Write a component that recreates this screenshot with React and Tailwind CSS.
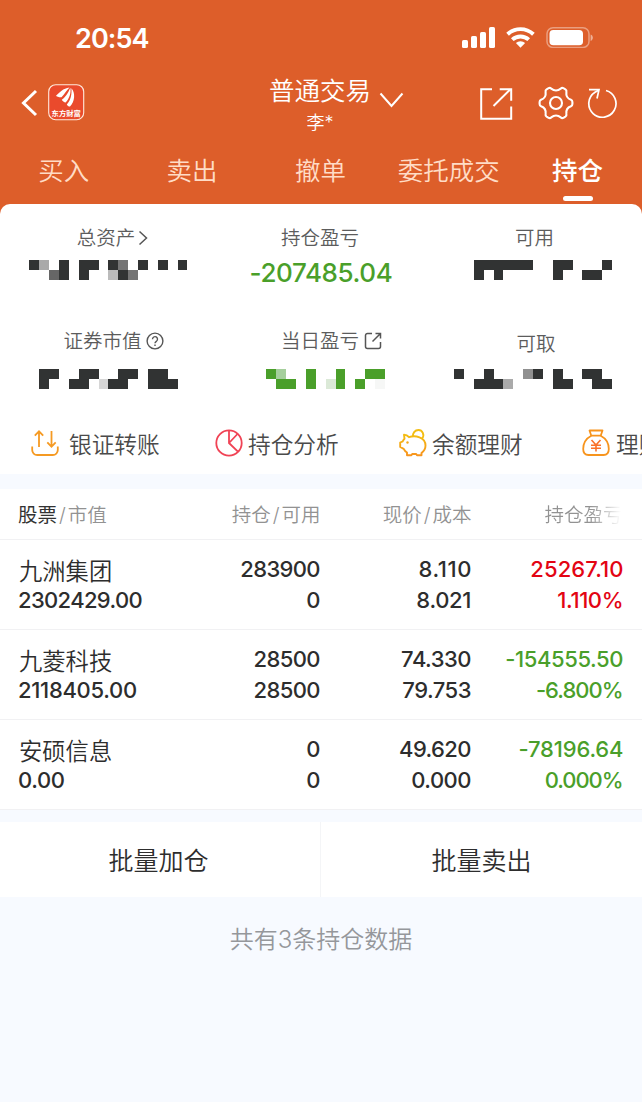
const DARK = '#313333';
const GREEN = '#4a9f2a';
const CELL = 642 / 65;

const edge = (k) => Math.floor(k * CELL + 0.25);

// Censored value: blocks are [column, row, colour] on the page-wide mosaic grid.
function Mosaic({ left, blocks, color = DARK }) {
  return (
    <svg width="214" height="20" viewBox="0 0 214 20" shapeRendering="crispEdges" className="block">
      {blocks.map(([k, row, fill]) => (
        <rect key={`${k}-${row}`} x={edge(k) - left} y={row * 10} width={edge(k + 1) - edge(k)} height="10" fill={fill || color} />
      ))}
    </svg>
  );
}

const TOTAL = [[3, 0], [4, 0, '#a9a9a9'], [6, 0], [8, 0], [9, 0], [11, 0], [12, 0, '#757575'], [14, 0], [16, 0], [18, 0],
  [5, 1, '#666666'], [6, 1], [8, 1], [11, 1, '#bbbbbb'], [12, 1], [13, 1, '#757575']];
const AVAILABLE = [[48, 0], [49, 0], [50, 0], [51, 0], [52, 0], [53, 0], [56, 0], [57, 0], [61, 0],
  [48, 1], [50, 1], [56, 1], [59, 1], [60, 1]];
const MARKET = [[4, 0], [5, 0], [8, 0], [9, 0], [12, 0], [13, 0], [15, 0], [16, 0],
  [4, 1], [7, 1], [8, 1], [10, 1, '#d6d6d6'], [11, 1], [12, 1], [15, 1], [16, 1], [17, 1]];
const TODAY = [[27, 0], [28, 0, '#a5cf9c'], [31, 0], [34, 0], [37, 0], [38, 0],
  [28, 1], [29, 1], [31, 1], [33, 1, '#dbe9d7'], [34, 1], [36, 1], [38, 1, '#f6f7f6']];
const WITHDRAW = [[46, 0], [49, 0], [53, 0, '#909090'], [54, 0], [56, 0], [59, 0], [60, 0],
  [48, 1], [49, 1], [50, 1], [51, 1, '#aaaaaa'], [56, 1], [57, 1], [60, 1], [61, 1]];

function StatusBar() {
  return (
    <div className="flex h-[76px] items-start justify-between pl-[75px] pr-[48px] pt-[23px]">
      <span className="text-[27px] font-semibold leading-[32px] tracking-[-0.9px]">20:54</span>
      <div className="flex items-start pt-[4px]">
        <svg width="34" height="21" viewBox="0 0 34 21" fill="#fff">
          <rect x="0" y="13" width="6" height="8" rx="1.6" />
          <rect x="9" y="9" width="6" height="12" rx="1.6" />
          <rect x="18" y="5" width="6" height="16" rx="1.6" />
          <rect x="27" y="0" width="6" height="21" rx="1.6" />
        </svg>
        <svg className="ml-[10px]" width="30" height="21" viewBox="0 0 30 21" fill="none" stroke="#fff" strokeWidth="3.9">
          <path d="M1.600 7.200a19 19 0 0 1 25.800 0" />
          <path d="M6.300 12.700a12 12 0 0 1 16.400 0" />
          <path d="M14.500 20.700l-4.600-4.600a6.500 6.500 0 0 1 9.200 0z" fill="#fff" stroke="none" />
        </svg>
        <svg className="ml-[10px]" width="48" height="21" viewBox="0 0 48 21">
          <rect x="1" y="0.8" width="42" height="19.600" rx="6" fill="none" stroke="#fff" strokeOpacity=".4" strokeWidth="1.500" />
          <rect x="3.500" y="3" width="33.500" height="15.200" rx="3.800" fill="#fff" />
          <path d="M44.600 7.500c3 1 3 5.400 0 6.400z" fill="#fff" fillOpacity=".5" />
        </svg>
      </div>
    </div>
  );
}

function Logo() {
  return (
    <svg className="ml-[10px] mt-[8px]" width="37" height="37" viewBox="0 0 37 37">
      <rect x="0.7" y="0.7" width="35" height="35" rx="7" fill="#ea4a2c" stroke="#ffe9dc" strokeWidth="1.100" />
      <path d="M8 11.800C11.500 8.500 15 4.500 21.500 3.600C19 6 17 9.500 13.500 13.200C11.500 13.500 9.500 13 8 11.800z" fill="#fff" />
      <path d="M13.800 15.700C18.500 12.500 20.500 8 22.300 3.800C23.300 8.500 21.500 14.500 17.600 18.600C16 18.200 14.500 17.200 13.800 15.700z" fill="#fff" />
      <path d="M18.800 20.400C22.800 16 24 10 23.400 4.200C27.500 8.500 27 17.500 22 22.600C20.600 22.300 19.300 21.500 18.800 20.400z" fill="#fff" />
      <text x="18.200" y="31.800" textAnchor="middle" fontSize="7.300" fontWeight="700" fill="#fff" fontFamily="'Noto Sans CJK SC', sans-serif">东方财富</text>
    </svg>
  );
}

function TitleBar() {
  return (
    <div className="grid h-[70px] grid-cols-[1fr_166px_1fr]">
      <div className="flex items-start pl-[20px]">
        <svg className="mt-[13px]" width="18" height="28" viewBox="0 0 18 28" fill="none" stroke="#fff" strokeWidth="3">
          <path d="M16 2L3.500 14L16 26" />
        </svg>
        <Logo />
      </div>
      <div>
        <div className="flex items-start justify-end">
          <span className="whitespace-nowrap text-[25.500px] font-[350] leading-[30px]">普通交易</span>
          <svg className="ml-[8px] mt-[16px] shrink-0" width="25" height="17" viewBox="0 0 25 17" fill="none" stroke="#fff" strokeWidth="2">
            <path d="M1.500 1.500L12.500 14L23.500 1.500" />
          </svg>
        </div>
        <div className="pr-[2px] text-center text-[18px] font-[350] leading-[28px]">李*</div>
      </div>
      <div className="flex items-start justify-end pr-[24px] pt-[10px]">
        <svg className="mt-[1px]" width="35" height="34" viewBox="0 0 35 34" fill="none" stroke="#fff" strokeWidth="2">
          <path d="M12 2.200H1.200v29.600h30V19.500" />
          <path d="M13.500 19L30.200 2.500" />
          <path d="M19.700 2.200H31.200v11.500" />
        </svg>
        <svg className="ml-[23px]" width="36" height="34" viewBox="0 0 36 34" fill="none" stroke="#fff" strokeWidth="2.100" strokeLinejoin="round">
          <path d="M10.600 2.200Q12 1.400 13.200 2.600Q18 6.400 22.800 2.600Q24 1.400 25.400 2.200L27.400 3.400Q28.800 4.300 28.400 6Q27.600 12 33 13.800Q34.400 14.300 34.400 16V18Q34.400 19.700 33 20.200Q27.600 22 28.400 28Q28.800 29.700 27.400 30.600L25.400 31.800Q24 32.600 22.800 31.400Q18 27.600 13.200 31.400Q12 32.600 10.600 31.800L8.600 30.600Q7.200 29.700 7.600 28Q8.400 22 3 20.200Q1.600 19.700 1.600 18V16Q1.600 14.300 3 13.800Q8.400 12 7.600 6Q7.200 4.300 8.600 3.400Z" />
          <circle cx="18" cy="17" r="6" />
        </svg>
        <svg className="ml-[13px] mt-[2px]" width="31" height="32" viewBox="0 0 31 32" fill="none" stroke="#fff" strokeWidth="1.700">
          <path d="M19 2.500A13.600 13.600 0 1 1 8 4.200L11.500 2.200" />
          <path d="M2 1.700H12L10 10.500" />
        </svg>
      </div>
    </div>
  );
}

function Tabs() {
  return (
    <nav className="flex h-[58px] items-start text-[25.500px] leading-[50px]">
      {['买入', '卖出', '撤单', '委托成交', '持仓'].map((t) => (
        <div
          key={t}
          className={t === '持仓'
            ? 'flex w-[128px] flex-col items-center font-medium text-white'
            : 'flex w-[128.400px] flex-col items-center pr-[1px] font-[350] text-[#ffdcc6]'}
        >
          <span className="whitespace-nowrap">{t}</span>
          {t === '持仓' && <span className="h-[5px] w-[30px] rounded-full bg-white" />}
        </div>
      ))}
    </nav>
  );
}

function Label({ children, className = '' }) {
  return <div className={`flex h-[24px] items-center justify-center text-[19.500px] font-[350] leading-[24px] text-[#5c5c5c] ${className}`}>{children}</div>;
}

function Summary() {
  return (
    <section className="h-[270px] rounded-t-[10px] bg-white pt-[22px]">
      <div className="grid h-[103px] grid-cols-3">
        <div>
          <Label className="pl-[11px]">
            总资产
            <svg className="ml-[3px]" width="10" height="16" viewBox="0 0 10 16" fill="none" stroke="#555" strokeWidth="1.500"><path d="M1.500 1.500L8.500 8L1.500 14.500" /></svg>
          </Label>
          <div className="mt-[10px]"><Mosaic left={0} blocks={TOTAL} /></div>
        </div>
        <div>
          <Label className="pr-[2px]">持仓盈亏</Label>
          <div className="mt-[7px] text-center text-[26px] font-medium leading-[32px] tracking-[-0.400px] text-[#4a9f2a]">-207485.04</div>
        </div>
        <div>
          <Label className="pr-[1px]">可用</Label>
          <div className="mt-[10px]"><Mosaic left={428} blocks={AVAILABLE} /></div>
        </div>
      </div>
      <div className="grid h-[83px] grid-cols-3">
        <div>
          <Label className="pl-[13px]">
            证券市值
            <svg className="ml-[4px]" width="18" height="18" viewBox="0 0 18 18" fill="none" stroke="#555" strokeWidth="1.400">
              <circle cx="9" cy="9" r="7.900" />
              <path d="M6.500 7.200a2.500 2.500 0 1 1 3.800 2.100c-.9.600-1.300 1-1.300 2" />
              <path d="M9 12.600v1.400" />
            </svg>
          </Label>
          <div className="mt-[16px]"><Mosaic left={0} blocks={MARKET} /></div>
        </div>
        <div>
          <Label className="pl-[22px]">
            当日盈亏
            <svg className="ml-[5px]" width="19" height="18" viewBox="0 0 19 18" fill="none" stroke="#555" strokeWidth="1.500">
              <path d="M8 1.500H3.500a2 2 0 0 0-2 2v11a2 2 0 0 0 2 2h11a2 2 0 0 0 2-2V10" />
              <path d="M8.500 9.500L16.500 1.500M11.500 1.500h5v5" />
            </svg>
          </Label>
          <div className="mt-[16px]"><Mosaic left={214} blocks={TODAY} color={GREEN} /></div>
        </div>
        <div>
          <Label className="pl-[2px] pt-[5px]">可取</Label>
          <div className="mt-[16px]"><Mosaic left={428} blocks={WITHDRAW} /></div>
        </div>
      </div>
      <Shortcuts />
    </section>
  );
}

function Shortcuts() {
  return (
    <div className="flex h-[62px] overflow-hidden whitespace-nowrap pl-[31px] pt-[16px] text-[22.700px] font-[350] leading-[33px] text-[#4a4a4a]">
      <div className="flex w-[184px] shrink-0 items-start">
        <svg className="mr-[10px] mt-[1px] shrink-0" width="28" height="28" viewBox="0 0 28 28" fill="none" stroke="#f59a23" strokeWidth="1.800">
          <path d="M1.200 17.500v3.500a5 5 0 0 0 5 5h15.600a5 5 0 0 0 5-5v-3.500" />
          <path d="M8 18V2.500M3.800 6.700L8 2.300l4.200 4.400M20.500 2v15.500M16.300 13.300l4.200 4.400l4.200-4.400" />
        </svg>
        银证转账
      </div>
      <div className="flex w-[184px] shrink-0 items-start">
        <svg className="mr-[5px] mt-[1px] shrink-0" width="28" height="28" viewBox="0 0 28 28" fill="none" stroke="#f04355" strokeWidth="1.800">
          <circle cx="14" cy="14" r="12.700" />
          <path d="M14 1.300V14L23.200 22.800M14 14L22.500 5" />
        </svg>
        持仓分析
      </div>
      <div className="flex w-[183px] shrink-0 items-start">
        <svg className="mr-[5px] shrink-0" width="28" height="29" viewBox="0 0 28 29" fill="none" strokeWidth="1.900" strokeLinejoin="round">
          <defs><linearGradient id="pig" x1="0" y1="0" x2="0" y2="1"><stop offset="0" stopColor="#f3bd12" /><stop offset="1" stopColor="#f7941d" /></linearGradient></defs>
          <path stroke="url(#pig)" d="M5 6.800q3 .2 5 2.400C16 7 26.500 9 26.500 17.500c0 3.500-1.700 5.800-4 7.500v2.200h-4.500l-.8-1.200h-4l-.8 1.200H8v-2.700c-1.600-1-2.600-2.200-3.300-3.700L1.200 19v-4.500l2.600-1.200c.3-1 .8-1.800 1.700-2.600z" />
          <path stroke="#f3bd12" d="M14 8.500c-.5-3 1.700-6.500 5.500-6.500s6.500 4.800 3.600 8.300" />
          <circle cx="8.500" cy="14.500" r="1.200" fill="#f5a81b" />
        </svg>
        余额理财
      </div>
      <div className="flex w-[184px] shrink-0 items-start">
        <svg className="mr-[6px] mt-[1px] shrink-0" width="28" height="28" viewBox="0 0 28 28" fill="none" stroke="#f7941d" strokeWidth="1.800" strokeLinejoin="round">
          <path d="M7.500 1.500h13l-1.800 5.200h-9.400z" />
          <path d="M9.300 6.700C4 9.500 1.200 15 1.200 20c0 4 1.500 6 5.300 6h15c3.800 0 5.300-2 5.300-6c0-5-2.800-10.500-8.100-13.300" />
          <path stroke="#f9722b" strokeWidth="1.600" d="M9.500 11l4.500 5l4.500-5M9 16.200h10M9 19.200h10M14 16v6.500" />
        </svg>
        理财
      </div>
    </div>
  );
}

const COLS = 'grid grid-cols-[182px_120.500px_151px_152px] pl-[18px]';

// Each figure carries its own letter spacing in pixels: [text, spacing].
const HOLDINGS = [
  { name: '九洲集团', value: ['2302429.00', -0.65], qty: [['283900', -0.65], ['0', 0]], price: [['8.110', 0.6], ['8.021', -0.3]], pnl: [['25267.10', 0.1], ['1.110%', -0.4]], up: true },
  { name: '九菱科技', value: ['2118405.00', -0.3], qty: [['28500', -0.6], ['28500', -0.6]], price: [['74.330', -0.5], ['79.753', -0.5]], pnl: [['-154555.50', -0.4], ['-6.800%', -1]] },
  { name: '安硕信息', value: ['0.00', -0.4], qty: [['0', 0], ['0', 0]], price: [['49.620', -0.6], ['0.000', -0.5]], pnl: [['-78196.64', -0.15], ['0.000%', -1.1]] },
];

function Num({ value: [text, spacing], className }) {
  return <div className={className} style={{ letterSpacing: spacing, marginRight: -spacing }}>{text}</div>;
}

function Pair({ values, className = '' }) {
  return (
    <div className={`text-right ${className}`}>
      <Num value={values[0]} className="leading-[32px]" />
      <Num value={values[1]} className="leading-[31px]" />
    </div>
  );
}

function Holdings() {
  return (
    <section className="mt-[15px] bg-white">
      <div className={`${COLS} h-[51px] border-b border-[#f1f1f3] text-[19.500px] font-[350] leading-[52px] text-[#929292]`}>
        <div><span className="font-normal text-[#333]">股票</span><span className="mx-[2px]">/</span>市值</div>
        <div className="text-right">持仓<span className="mx-[2px]">/</span>可用</div>
        <div className="text-right">现价<span className="mx-[2px]">/</span>成本</div>
        <div className="overflow-hidden bg-linear-to-r from-[#929292] from-78% to-transparent to-98% bg-clip-text pl-[73px] whitespace-nowrap text-transparent">持仓盈亏</div>
      </div>
      {HOLDINGS.map((h) => (
        <div key={h.name} className={`${COLS} h-[90px] border-b border-[#f1f1f3] pt-[13px] text-[22px] font-medium text-[#2d2d2d]`}>
          <div>
            <div className="pl-[1px] pt-[1px] text-[23.300px] font-[350] leading-[35px]">{h.name}</div>
            <Num value={h.value} className="leading-[23px]" />
          </div>
          <Pair values={h.qty} />
          <Pair values={h.price} />
          <Pair values={h.pnl} className={h.up ? 'text-[#e30413]' : 'text-[#4a9f2a]'} />
        </div>
      ))}
    </section>
  );
}

export default function App() {
  return (
    <div className="h-[1102px] w-[642px] overflow-hidden bg-[#f7faff] font-['Inter','Noto_Sans_CJK_SC',sans-serif]">
      <div className="bg-[#dd5e2a]">
        <header className="text-white">
          <StatusBar />
          <TitleBar />
          <Tabs />
        </header>
        <Summary />
      </div>
      <Holdings />
      <div className="mt-[12px] grid h-[75px] grid-cols-2 bg-white text-center text-[25px] font-[350] leading-[30px] text-[#2d2d2d]">
        <button className="h-[75px] border-r border-[#f4f5f7] pr-[3px] pt-[2px]">批量加仓</button>
        <button className="h-[75px] pt-[2px]">批量卖出</button>
      </div>
      <p className="mt-[26px] text-center text-[24px] font-[350] leading-[34px] text-[#95979b]">共有3条持仓数据</p>
    </div>
  );
}
